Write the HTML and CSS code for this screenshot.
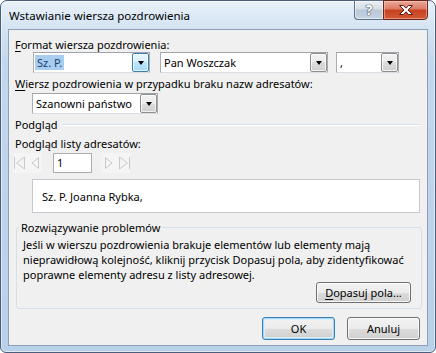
FILE: index.html
```html
<!DOCTYPE html>
<html lang="pl">
  <head>
    <meta charset="UTF-8" />
    <title>Wstawianie wiersza pozdrowienia</title>
    <link rel="stylesheet" href="styles.css">
  </head>
  <body>
    <div class="window">
      <div class="titlebar">
        <span class="title">Wstawianie wiersza pozdrowienia</span>
        <div class="caption-buttons">
          <div class="cap-btn help"><span>?</span></div>
          <div class="cap-btn close">
            <svg width="16" height="12" viewBox="0 0 16 12">
              <path d="M1.5 1.5h4l2.5 2.7 2.5-2.7h4l-4.5 4.5 4.5 4.5h-4l-2.5-2.7-2.5 2.7h-4l4.5-4.5z" fill="#fff" stroke="#5a1d12" stroke-width="1" stroke-linejoin="round"/>
            </svg>
          </div>
        </div>
      </div>

      <div class="client">
        <div class="label first"><u>F</u>ormat wiersza pozdrowienia:</div>
        <div class="combo-row">
          <div class="combo w-title">
            <span class="combo-text selected">Sz. P.</span>
            <span class="drop hot"><i></i></span>
          </div>
          <div class="combo w-name">
            <span class="combo-text">Pan Woszczak</span>
            <span class="drop"><i></i></span>
          </div>
          <div class="combo w-punct">
            <span class="combo-text">,</span>
            <span class="drop"><i></i></span>
          </div>
        </div>

        <div class="label"><u>W</u>iersz pozdrowienia w przypadku braku nazw adresatów:</div>
        <div class="combo w-generic">
          <span class="combo-text">Szanowni państwo</span>
          <span class="drop"><i></i></span>
        </div>

        <div class="section">
          <span>Podgląd</span>
          <div class="section-line"></div>
        </div>

        <div class="label preview-label">Podgląd listy adresatów:</div>
        <div class="nav-row">
          <span class="nav-btn first-btn">
            <svg width="14" height="20" viewBox="0 0 14 20">
              <path d="M1.5 4v12" stroke="#c9c9c9" stroke-width="1"/>
              <path d="M3.5 10l8-6v12z" fill="#f4f4f4" stroke="#c9c9c9" stroke-width="1" stroke-linejoin="round"/>
            </svg>
          </span>
          <span class="nav-btn">
            <svg width="15" height="20" viewBox="0 0 15 20">
              <path d="M5 10l6.5-5.5v11z" fill="#f4f4f4" stroke="#c9c9c9" stroke-width="1" stroke-linejoin="round"/>
            </svg>
          </span>
          <div class="record-box">1</div>
          <span class="nav-btn next-btn">
            <svg width="14" height="20" viewBox="0 0 14 20">
              <path d="M11 10l-6.5-5.5v11z" fill="#f4f4f4" stroke="#c9c9c9" stroke-width="1" stroke-linejoin="round"/>
            </svg>
          </span>
          <span class="nav-btn">
            <svg width="15" height="20" viewBox="0 0 15 20">
              <path d="M12.5 10l-8-6v12z" fill="#f4f4f4" stroke="#c9c9c9" stroke-width="1" stroke-linejoin="round"/>
              <path d="M14.5 4v12" stroke="#c9c9c9" stroke-width="1"/>
            </svg>
          </span>
        </div>

        <div class="preview-box">Sz. P. Joanna Rybka,</div>

        <fieldset class="trouble">
          <legend>Rozwiązywanie problemów</legend>
          <p>Jeśli w wierszu pozdrowienia brakuje elementów lub elementy mają<br>nieprawidłową kolejność, kliknij przycisk Dopasuj pola, aby zidentyfikować<br>poprawne elementy adresu z listy adresowej.</p>
          <div class="match-row">
            <button class="btn match-btn"><u>D</u>opasuj pola...</button>
          </div>
        </fieldset>

        <div class="dialog-buttons">
          <button class="btn default">OK</button>
          <button class="btn">Anuluj</button>
        </div>
      </div>
    </div>
  </body>
</html>
```

FILE: styles.css
```css
* {
  box-sizing: border-box;
}

body {
  margin: 0;
  background: #ffffff;
  font-family: "Noto Sans", sans-serif;
  font-size: 11px;
  color: #000;
}

u {
  text-decoration-thickness: 1px;
  text-underline-offset: 2px;
}

/* window frame */
.window {
  width: 436px;
  height: 353px;
  border: 1px solid #4a5e7c;
  border-radius: 7px 7px 6px 6px;
  background: linear-gradient(to bottom, #e9f1f9 0px, #d8e6f4 22px, #c3d7ed 60px, #b9d0e9 100%);
  box-shadow: inset 0 0 0 1px rgba(255, 255, 255, 0.55);
  padding: 0 7px 6px 7px;
  display: flex;
  flex-direction: column;
}

.titlebar {
  height: 28px;
  display: flex;
  align-items: flex-start;
}

.title {
  flex: 1;
  padding-top: 7px;
  padding-left: 1px;
  line-height: 15px;
  font-size: 11.5px;
}

.caption-buttons {
  display: flex;
  margin-top: -1px;
}

.cap-btn {
  height: 20px;
  display: flex;
  align-items: center;
  justify-content: center;
  border: 1px solid #5d6f87;
}

.help {
  width: 29px;
  border-right: none;
  border-radius: 0 0 0 4px;
  background: linear-gradient(to bottom, #e9eef4 0%, #d5dde7 45%, #b9c7d7 50%, #c6d3e2 100%);
  box-shadow: inset 0 0 0 1px rgba(255, 255, 255, 0.5);
}

.help span {
  color: #fff;
  font-weight: bold;
  font-size: 14px;
  line-height: 14px;
  text-shadow: 0 0 1px #35475e, 0 0 1px #35475e, 0 0 1px #35475e;
}

.close {
  width: 45px;
  border-color: #6b241a;
  border-radius: 0 0 4px 0;
  background: linear-gradient(to bottom, #e9a999 0%, #dd7a63 45%, #c8401f 50%, #d35a34 100%);
  box-shadow: inset 0 0 0 1px rgba(255, 220, 210, 0.45);
}

/* client area */
.client {
  flex: 1;
  background: #f0f0f0;
  border: 1px solid #8d9fb9;
  padding: 0 7px 0 6px;
}

.label {
  line-height: 15px;
  margin-top: 3px;
  white-space: nowrap;
}

.label.first {
  margin-top: 7px;
}

.combo-row {
  display: flex;
  margin-left: 18px;
  height: 21px;
}

.combo {
  height: 21px;
  display: flex;
  align-items: center;
  background: #fff;
  border: 1px solid #abadb3;
  border-top-color: #a0a3aa;
  border-bottom-color: #d8dce3;
}

.combo-text {
  padding-left: 3px;
  line-height: 15px;
  white-space: nowrap;
}

.combo-text.selected {
  margin-left: 1px;
  padding: 0 2px;
  background: #a9cdee;
  color: #1b3f73;
}

.w-title {
  width: 117px;
}

.w-name {
  width: 168px;
  margin-left: 10px;
}

.w-punct {
  width: 63px;
  margin-left: 8px;
}

.w-generic {
  width: 126px;
  margin-left: 17px;
  margin-top: 2px;
}

.drop {
  margin-left: auto;
  width: 17px;
  height: 19px;
  border: 1px solid #8e8f8f;
  border-radius: 2px;
  background: linear-gradient(to bottom, #f2f2f2 0%, #ebebeb 50%, #dddddd 50%, #cfcfcf 100%);
  box-shadow: inset 0 0 0 1px rgba(255, 255, 255, 0.7);
  display: flex;
  align-items: center;
  justify-content: center;
}

.drop.hot {
  border-color: #3c7fb1;
  background: linear-gradient(to bottom, #eaf6fd 0%, #d9f0fc 50%, #bee6fd 50%, #a7d9f5 100%);
}

.drop i {
  width: 0;
  height: 0;
  border-left: 3.5px solid transparent;
  border-right: 3.5px solid transparent;
  border-top: 4px solid #000;
  margin-top: 1px;
}

/* preview section */
.section {
  display: flex;
  align-items: center;
  margin-top: 3px;
  line-height: 15px;
  width: 405px;
}

.section-line {
  flex: 1;
  margin-left: 4px;
  margin-top: 1px;
  border-top: 1px solid #d5dfe5;
  border-bottom: 1px solid #fff;
}

.preview-label {
  margin-top: 4px;
}

.nav-row {
  display: flex;
  align-items: center;
  height: 20px;
  margin-top: 2px;
  margin-left: -2px;
}

.nav-btn {
  display: flex;
  height: 20px;
  background: #f5f5f5;
}

.record-box {
  width: 39px;
  height: 20px;
  margin-left: 11px;
  margin-right: 9px;
  background: #fff;
  border: 1px solid #abadb3;
  padding-left: 3px;
  line-height: 18px;
}

.preview-box {
  margin-top: 6px;
  margin-left: 17px;
  width: 388px;
  height: 34px;
  background: #fff;
  border: 1px solid #c5c8ce;
  display: flex;
  align-items: center;
  padding-left: 9px;
  padding-top: 1px;
}

/* troubleshooting group */
.trouble {
  margin: 7px 0 0 1px;
  width: 406px;
  padding: 0 10px 5px 2px;
  border: 1px solid #d5dfe5;
  border-radius: 3px;
}

.trouble legend {
  padding: 0 2px;
  line-height: 15px;
}

.trouble p {
  margin: 2px 0 0 4px;
  line-height: 15px;
  white-space: nowrap;
}

.match-row {
  display: flex;
  justify-content: flex-end;
  margin-top: 0;
}

.btn {
  height: 21px;
  padding: 0;
  font-family: inherit;
  font-size: 11px;
  color: #000;
  border: 1px solid #707070;
  border-radius: 3px;
  background: linear-gradient(to bottom, #f2f2f2 0%, #ebebeb 50%, #dddddd 50%, #cfcfcf 100%);
  box-shadow: inset 0 0 0 1px rgba(255, 255, 255, 0.8);
}

.match-btn {
  width: 95px;
}

.dialog-buttons {
  display: flex;
  justify-content: flex-end;
  gap: 12px;
  margin-top: 8px;
}

.dialog-buttons .btn {
  height: 23px;
  width: 73px;
}

.dialog-buttons .btn.default {
  border-color: #3c7fb1;
  box-shadow: inset 0 0 0 1px #a5d6f5, inset 0 0 0 2px #dbeffb;
}
```
